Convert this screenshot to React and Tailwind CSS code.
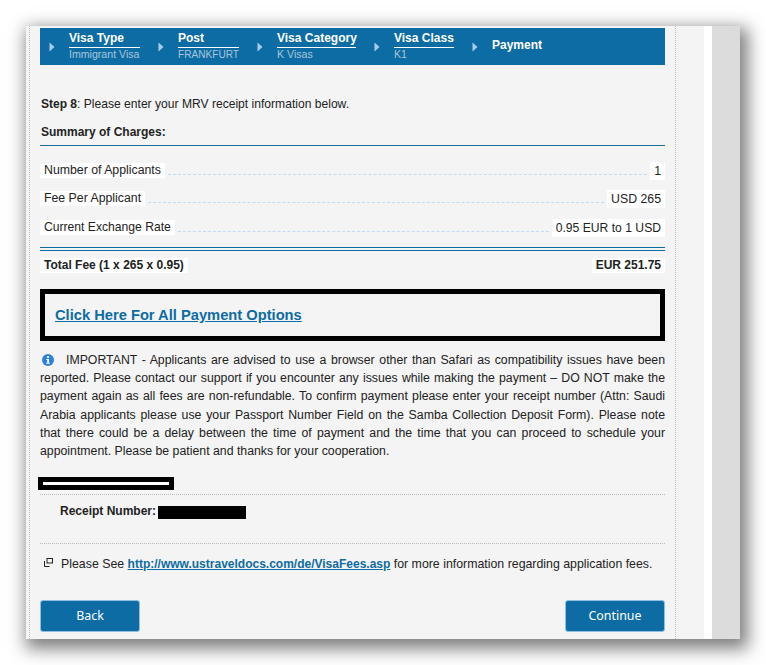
import React from "react";

const Arrow = () => (
  <svg width="6" height="10" viewBox="0 0 6 10" className="shrink-0 self-center">
    <path d="M0.5 0.5 L5.5 5 L0.5 9.5 Z" fill="#a9cdee" />
  </svg>
);

const Step = ({ title, sub, w, subSize = "text-[10.6px]" }) => (
  <div className={"flex flex-col whitespace-nowrap " + w}>
    <div className="text-[12px] leading-[14px] font-bold text-white border-b border-white pb-[2px] pt-[3px]">{title}</div>
    <div className={subSize + " leading-[13px] text-[#a9c6dc]"}>{sub}</div>
  </div>
);

const Row = ({ label, value, className = "" }) => (
  <div className={"flex items-center justify-between h-[15px] " + className}>
    <span className="bg-white px-1 h-[15px] leading-[15px] whitespace-nowrap mr-[2px]">{label}</span>
    <span className="flex-1 border-b border-dashed border-[#c0dcf5] mt-[8px] mx-[1px]" />
    <span className="bg-white px-1 h-[18px] leading-[18px] whitespace-nowrap ml-[2px]">{value}</span>
  </div>
);

export default function App() {
  return (
    <div className="min-h-[665px] bg-white pt-[26px] pl-[26px] overflow-hidden" style={{ fontFamily: '"Liberation Sans", Arial, sans-serif' }}>
      <div className="flex w-[714px] h-[613px] shadow-[4px_6px_16px_4px_rgba(0,0,0,0.5)] text-[12px] text-[#222]">
        <div className="w-[678px] bg-[#f4f4f4] pl-[3px]">
          <div className="w-[647px] h-full border-x border-dotted border-[#bbb] pl-[10px] pr-[9px] pt-[2px]">
            <div className="w-[625px] h-[37px] bg-[#0d6ca3] flex pl-[9px] gap-[18px]">
              <div className="flex gap-[14px]"><Arrow /><Step title="Visa Type" sub="Immigrant Visa" w="w-[71px]" /></div>
              <div className="flex gap-[14px]"><Arrow /><Step title="Post" sub="FRANKFURT" w="w-[61px]" subSize="text-[10.1px]" /></div>
              <div className="flex gap-[14px]"><Arrow /><Step title="Visa Category" sub="K Visas" w="w-[79px]" /></div>
              <div className="flex gap-[14px]"><Arrow /><Step title="Visa Class" sub="K1" w="w-[60px]" /></div>
              <div className="flex gap-[14px]"><Arrow /><span className="self-center pb-[4px] text-[12px] font-bold text-white">Payment</span></div>
            </div>

            <p className="mt-[32px] ml-[1px] leading-[14px] text-[12.1px]"><b className="text-[12px]">Step 8</b>: Please enter your MRV receipt information below.</p>
            <p className="mt-[14px] ml-[1px] leading-[14px] font-bold">Summary of Charges:</p>
            <div className="border-b border-[#1b6a9c] mt-[6px] w-[625px]" />

            <div className="w-[625px] mt-[17px]">
              <Row label="Number of Applicants" value="1" className="text-[12.3px]" />
              <Row label="Fee Per Applicant" value="USD 265" className="mt-[13px] text-[12.3px]" />
              <Row label="Current Exchange Rate" value="0.95 EUR to 1 USD" className="mt-[14px] text-[12.15px]" />
              <div className="h-[2px] border-y border-[#0d6ca3] mt-[12px] box-content" />
              <div className="flex justify-between mt-[7px] font-bold h-[15px] leading-[15px]">
                <span className="bg-white px-1">Total Fee (1 x 265 x 0.95)</span>
                <span className="bg-white px-1">EUR 251.75</span>
              </div>
              <div className="border-[5px] border-black h-[52px] mt-[16px] flex items-center pl-[10px]">
                <a href="#" className="text-[14.7px] font-bold text-[#0d6ca3] underline">Click Here For All Payment Options</a>
              </div>
              <p className="mt-[10px] leading-[18.2px] text-justify text-[12.3px]">
                <svg width="12" height="12" viewBox="0 0 12 12" className="inline-block ml-[2px] mr-[12px] align-[-2px]">
                  <circle cx="6" cy="6" r="6" fill="#2f7fe0" />
                  <rect x="5" y="2.2" width="2" height="1.8" fill="#fff" />
                  <path d="M4.4 5h2.6v3.8h0.9v1H4.2v-1h1V6H4.4z" fill="#fff" />
                </svg>
                IMPORTANT - Applicants are advised to use a browser other than Safari as compatibility issues have been reported. Please contact our support if you encounter any issues while making the payment – DO NOT make the payment again as all fees are non-refundable. To confirm payment please enter your receipt number (Attn: Saudi Arabia applicants please use your Passport Number Field on the Samba Collection Deposit Form). Please note that there could be a delay between the time of payment and the time that you can proceed to schedule your appointment. Please be patient and thanks for your cooperation.
              </p>
              <div className="-ml-[2px] mt-[17px] w-[136px] h-[13px] bg-black flex items-center justify-center">
                <div className="w-[126px] h-[3px] bg-white" />
              </div>
              <div className="border-t border-dotted border-[#bbb] mt-[4px]" />
              <div className="flex items-center ml-[20px] mt-[11px] h-[13px] font-bold">
                <span className="pb-[3px]">Receipt Number:</span>
                <span className="w-[88px] h-[13px] bg-black ml-[2px]" />
              </div>
              <div className="border-t border-dotted border-[#bbb] mt-[24px]" />
              <div className="flex items-center mt-[13px] ml-[4px] h-[14px]">
                <svg width="9" height="9" viewBox="0 0 9 9" className="shrink-0 mr-[8px] -mt-[3px]" fill="none" stroke="#222">
                  <rect x="3" y="0.5" width="5.5" height="4.5" />
                  <path d="M0.5 3v5.5h5" />
                </svg>
                <span className="text-[12.35px] whitespace-nowrap">Please See <a href="#" className="text-[12px] font-bold text-[#0d6ca3] underline">http://www.ustraveldocs.com/de/VisaFees.asp</a> for more information regarding application fees.</span>
              </div>
              <div className="flex justify-between mt-[29px]">
                <button className="w-[100px] h-[32px] pt-[1px] bg-[#0d6ca3] border border-[#8fbfdf] rounded-[3px] text-white text-[12.4px]" style={{ fontFamily: '"Noto Sans", sans-serif' }}>Back</button>
                <button className="w-[100px] h-[32px] pt-[1px] bg-[#0d6ca3] border border-[#8fbfdf] rounded-[3px] text-white text-[12.4px]" style={{ fontFamily: '"Noto Sans", sans-serif' }}>Continue</button>
              </div>
            </div>
          </div>
        </div>
        <div className="w-[8px] bg-white" />
        <div className="flex-1 bg-[#dcdcdc]" />
      </div>
    </div>
  );
}
